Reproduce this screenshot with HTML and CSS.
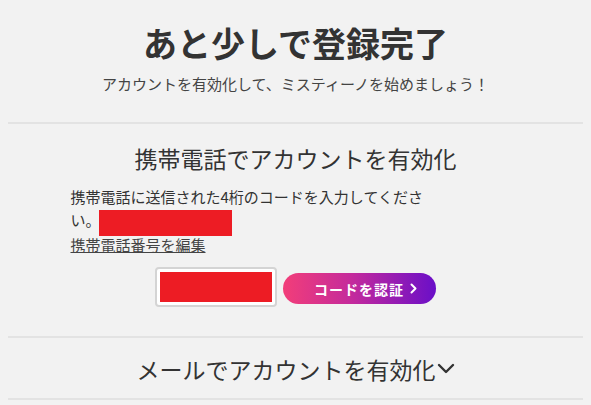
FILE: index.html
```html
<!DOCTYPE html>
<html lang="ja">
<head>
<meta charset="utf-8">
<title>あと少しで登録完了</title>
<link rel="stylesheet" href="styles.css">
</head>
<body>
<div class="page">
  <header class="intro">
    <h1 class="title">あと少しで登録完了</h1>
    <p class="lead">アカウントを有効化して、ミスティーノを始めましょう！</p>
  </header>
  <hr class="rule">
  <section class="verify">
    <h2 class="section-title">携帯電話でアカウントを有効化</h2>
    <div class="body">
      <p class="desc">携帯電話に送信された4桁のコードを入力してください。<span class="redact"></span></p>
      <a class="edit-link" href="#">携帯電話番号を編集</a>
    </div>
    <div class="code-row">
      <div class="code-input"><span class="redact-fill"></span></div>
      <button class="btn" type="button">コードを認証<svg class="btn-chev" width="7" height="11" viewBox="0 0 7 11"><path d="M1.5 1.5 L5.5 5.5 L1.5 9.5" fill="none" stroke="#fff" stroke-width="2" stroke-linecap="round" stroke-linejoin="round"/></svg></button>
    </div>
  </section>
  <hr class="rule">
  <div class="alt">
    <span class="alt-title">メールでアカウントを有効化</span>
    <svg class="alt-chev" width="18" height="11" viewBox="0 0 18 11"><path d="M2 2 L9 9 L16 2" fill="none" stroke="#333" stroke-width="2.4" stroke-linecap="round" stroke-linejoin="round"/></svg>
  </div>
  <hr class="rule">
</div>
</body>
</html>
```
FILE: styles.css
```css
* { box-sizing: border-box; }
html, body { margin: 0; padding: 0; }
body {
  background: #f2f2f2;
  font-family: "Noto Sans CJK JP", "Noto Sans", sans-serif;
  color: #333;
}
.page { padding: 0 8px; }
.intro { text-align: center; padding-top: 22px; }
.title {
  margin: 0;
  font-size: 34px;
  line-height: 42px;
  font-weight: 700;
  color: #333;
}
.lead {
  margin: 9px 0 0;
  font-size: 15px;
  line-height: 22px;
  color: #444;
}
.rule {
  margin: 0;
  border: 0;
  height: 2px;
  background: #e3e3e3;
}
.intro + .rule { margin-top: 27px; }
.verify { width: 450px; margin: 0 auto; padding-top: 19px; padding-bottom: 29px; }
.section-title {
  margin: 0;
  text-align: center;
  font-size: 23px;
  line-height: 31px;
  font-weight: 400;
  color: #333;
}
.body { margin-top: 11px; width: 362px; font-size: 15px; line-height: 23px; color: #333; }
.desc { margin: 0; }
.redact {
  display: inline-block;
  width: 133px;
  height: 26px;
  margin: -3px 0 -3px -2px;
  vertical-align: -7px;
  background: #ed1c24;
}
.edit-link { color: #444; text-decoration: underline; }
.code-row {
  margin-top: 11px;
  display: flex;
  justify-content: center;
  align-items: center;
  gap: 6px;
}
.code-input {
  width: 122px;
  height: 40px;
  padding: 3px;
  border: 2px solid #d4d4d4;
  border-radius: 4px;
  background: #fff;
}
.redact-fill { display: block; width: 100%; height: 100%; background: #ed1c24; }
.btn {
  height: 31px;
  width: 153px;
  border: 0;
  border-radius: 16px;
  padding: 0 19px 0 31px;
  display: flex;
  align-items: center;
  justify-content: space-between;
  background: linear-gradient(90deg, #f23e79 0%, #c42a9c 45%, #6a0fc8 100%);
  color: #fff;
  font-family: "Noto Sans CJK JP", sans-serif;
  font-size: 14px;
  font-weight: 700;
  letter-spacing: 1px;
  margin-top: 3px;
}
.btn-chev { display: block; }
.alt {
  display: flex;
  justify-content: center;
  align-items: center;
  gap: 1px;
  padding: 16px 0 13px;
}
.alt-title { font-size: 23px; line-height: 31px; color: #333; }
.alt-chev { display: block; margin-top: -2px; }
```
